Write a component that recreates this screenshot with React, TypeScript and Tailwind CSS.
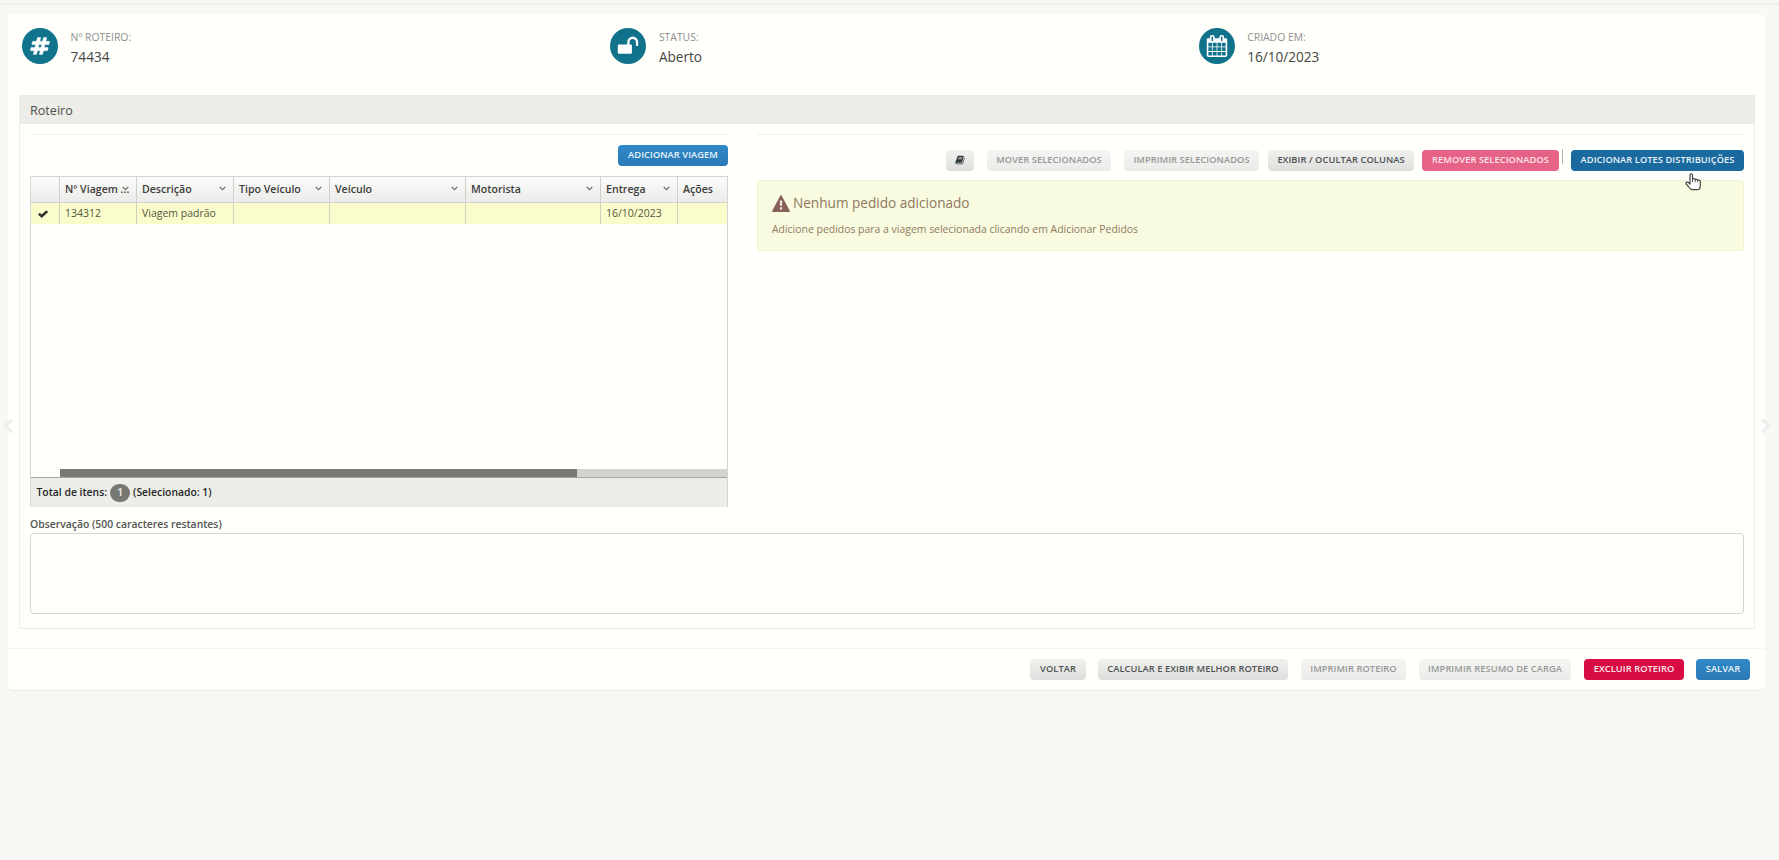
import * as React from "react";
import type { ReactNode } from "react";

const btn =
  "flex h-[21px] items-center justify-center rounded-[4px] pb-px text-[9.3px] font-semibold whitespace-nowrap tracking-[0.06px]";
const tones = {
  gray: "bg-linear-to-b from-[#f1f1ef] to-[#dededc] text-[#4f5353]",
  muted: "bg-linear-to-b from-[#f5f5f3] to-[#ebebe9] text-[#969997]",
  blue: "bg-linear-to-b from-[#3089c8] to-[#2b7ab5] text-[#e9f5fb]",
  navy: "bg-[#1a699f] text-[#e9f3f8]",
  pink: "bg-[#e66287] text-[#fbe4ea]",
  red: "bg-[#d80b43] text-[#fbe4ea]",
};

function Button({ tone, className, children }: { tone: keyof typeof tones; className: string; children: ReactNode }) {
  return <button className={`${btn} ${tones[tone]} ${className}`}>{children}</button>;
}

function HashIcon() {
  return (
    <svg viewBox="0 0 1792 1792" className="h-[20px] w-[20px]" fill="currentColor" stroke="currentColor" strokeWidth="40">
      <path d="M991 1024l64-256h-254l-64 256h254zm768-504l-56 224q-7 24-31 24h-327l-64 256h311q15 0 25 12 10 14 6 28l-56 224q-5 24-31 24h-327l-81 328q-7 24-31 24h-224q-16 0-26-12-9-12-6-28l78-312h-254l-81 328q-7 24-31 24h-225q-15 0-25-12-9-12-6-28l78-312h-311q-15 0-25-12-9-12-6-28l56-224q7-24 31-24h327l64-256h-311q-15 0-25-12-10-14-6-28l56-224q5-24 31-24h327l81-328q7-24 32-24h224q15 0 25 12 9 12 6 28l-78 312h254l81-328q7-24 32-24h224q15 0 25 12 9 12 6 28l-78 312h311q15 0 25 12 9 12 6 28z" />
    </svg>
  );
}

function UnlockIcon() {
  return (
    <svg viewBox="0 0 1792 1792" className="h-[22px] w-[22px]" fill="currentColor">
      <path d="M1728 576v256q0 26-19 45t-45 19h-64q-26 0-45-19t-19-45v-256q0-106-75-181t-181-75-181 75-75 181v192h96q40 0 68 28t28 68v576q0 40-28 68t-68 28h-960q-40 0-68-28t-28-68v-576q0-40 28-68t68-28h672v-192q0-185 131.500-316.500t316.500-131.500 316.500 131.500 131.500 316.500z" />
    </svg>
  );
}

function CalendarIcon() {
  return (
    <svg viewBox="0 0 1792 1792" className="h-[22px] w-[22px]" fill="currentColor">
      <path d="M192 1664h288v-288h-288v288zm352 0h320v-288h-320v288zm-352-352h288v-320h-288v320zm352 0h320v-320h-320v320zm-352-384h288v-288h-288v288zm736 736h320v-288h-320v288zm-384-736h320v-288h-320v288zm768 736h288v-288h-288v288zm-384-352h320v-320h-320v320zm-352-864v-288q0-13-9.500-22.500t-22.500-9.500h-64q-13 0-22.500 9.500t-9.500 22.500v288q0 13 9.500 22.500t22.500 9.500h64q13 0 22.500-9.500t9.500-22.500zm736 864h288v-320h-288v320zm-384-384h320v-288h-320v288zm384 0h288v-288h-288v288zm32-480v-288q0-13-9.500-22.500t-22.500-9.500h-64q-13 0-22.500 9.500t-9.500 22.500v288q0 13 9.500 22.500t22.500 9.500h64q13 0 22.500-9.500t9.500-22.500zm384-64v1280q0 52-38 90t-90 38h-1408q-52 0-90-38t-38-90v-1280q0-52 38-90t90-38h128v-96q0-66 47-113t113-47h64q66 0 113 47t47 113v96h384v-96q0-66 47-113t113-47h64q66 0 113 47t47 113v96h128q52 0 90 38t38 90z" />
    </svg>
  );
}

function BookIcon() {
  return (
    <svg viewBox="0 0 1792 1792" className="-mt-px h-[10px] w-[10px]" fill="#2f3a3d">
      <path d="M1703 478q40 57 18 129l-275 906q-19 64-76.500 107.500t-122.500 43.500h-923q-77 0-148.500-53.500t-99.500-131.500q-24-67-2-127 0-4 3-27t4-37q1-8-3-21.500t-3-19.500q2-11 8-21t16.500-23.500 16.500-23.500q23-38 45-91.500t30-91.500q3-10 .5-30t-.5-28q3-11 17-28t17-23q21-36 42-92t25-90q1-9-2.500-32t.5-28q4-13 22-30.500t22-22.500q19-26 42.500-84.500t27.500-96.500q1-8-3-25.500t-2-26.500q2-8 9-18t18-23 17-21q8-12 16.500-30.500t15-35 16-36 19.500-32 26.500-23.500 36-11.500 47.500 5.500l-1 3q38-9 51-9h761q74 0 114 56t18 130l-274 906q-36 119-71.500 153.500t-128.500 34.500h-869q-27 0-38 15-11 16-1 43 24 70 144 70h923q29 0 56-15.500t35-41.500l300-987q7-22 5-57 38 15 59 43zm-1064 2q-4 13 2 22.500t20 9.500h608q13 0 25.500-9.500t16.500-22.500l21-64q4-13-2-22.500t-20-9.500h-608q-13 0-25.500 9.500t-16.500 22.500zm-83 256q-4 13 2 22.500t20 9.500h608q13 0 25.500-9.500t16.500-22.500l21-64q4-13-2-22.500t-20-9.500h-608q-13 0-25.500 9.500t-16.500 22.500z" />
    </svg>
  );
}

function Info({ icon, label, value }: { icon: ReactNode; label: string; value: string }) {
  return (
    <div className="flex w-[588.3px] shrink-0 gap-[12.6px]">
      <div className="mt-[0.5px] flex size-9 shrink-0 items-center justify-center rounded-full bg-[#11728c] text-white">{icon}</div>
      <div>
        <div className="text-[10.4px] leading-[20px] text-[#8f908e]">{label}</div>
        <div className="text-[13.6px] leading-[20px] text-[#454644]">{value}</div>
      </div>
    </div>
  );
}

function Chevron() {
  return (
    <svg viewBox="0 0 7 5" className="mb-[4px] h-[5px] w-[7px] shrink-0" fill="none" stroke="#666" strokeWidth="1.1">
      <path d="M.7.8 3.500 3.700 6.300.8" />
    </svg>
  );
}

const columns = [
  { title: "", width: "w-[29px]", value: "", menu: false },
  { title: "Nº Viagem ...", width: "w-[77px]", value: "134312", menu: true },
  { title: "Descrição", width: "w-[97px]", value: "Viagem padrão", menu: true },
  { title: "Tipo Veículo", width: "w-[96px]", value: "", menu: true },
  { title: "Veículo", width: "w-[136px]", value: "", menu: true },
  { title: "Motorista", width: "w-[135px]", value: "", menu: true },
  { title: "Entrega", width: "w-[77px]", value: "16/10/2023", menu: true },
  { title: "Ações", width: "w-[49px]", value: "", menu: false },
];

function TripGrid() {
  return (
    <div className="mt-[10px] flex h-[331px] w-[698px] flex-col border border-b-0 border-[#d5d6d3]">
      <div className="flex h-[26px] shrink-0 border-b border-[#d2d3d0] bg-linear-to-b from-[#fbfbf9] to-[#ebebe9]">
        {columns.map((c, i) => (
          <div
            key={i}
            className={`${c.width} flex shrink-0 items-center justify-between border-r border-[#cfd0cd] pt-px pr-[7px] pl-[5px] text-[10.6px] font-semibold whitespace-nowrap text-[#3c3d3b] last:border-r-0`}
          >
            <span className="w-0">{c.title}</span>
            {c.menu && <Chevron />}
          </div>
        ))}
      </div>
      <div className="flex h-[21px] shrink-0 bg-[#fafdcb]">
        {columns.map((c, i) => (
          <div
            key={i}
            className={`${c.width} flex shrink-0 items-center border-r border-[#cfd0bd] pl-[5px] text-[10.5px] whitespace-nowrap text-[#555643] last:border-r-0`}
          >
            {i === 0 ? (
              <svg viewBox="0 0 10 8" className="ml-[2px] h-2 w-[10px]" fill="none" stroke="#333" strokeWidth="2.600">
                <path d="M.9 3.700 3.700 6.200 9.200 1.100" />
              </svg>
            ) : (
              c.value
            )}
          </div>
        ))}
      </div>
      <div className="flex-1" />
      <div className="ml-[29px] h-2 shrink-0 bg-[#d2d3cf]">
        <div className="h-full w-[517px] bg-[#787976]" />
      </div>
      <div className="flex h-[30px] shrink-0 items-center border-t border-[#a6a7a4] bg-[#ecede9] pl-[5.5px] text-[10.4px] font-semibold text-[#252624]">
        Total de itens:
        <span className="mx-[3px] flex h-[18px] w-5 items-center justify-center rounded-full bg-[#777874] text-[#f0f0ee]">1</span>
        (Selecionado: 1)
      </div>
    </div>
  );
}

export default function App() {
  return (
    <div className="relative h-[860px] w-[1779px] overflow-hidden bg-[#f8f9f5] font-['Open_Sans','Noto_Sans',sans-serif]">
      <div className="h-[5px] border-b-2 border-[#eff0ed]" />
      <main className="mt-[9px] ml-2 flex h-[677px] w-[1757px] flex-col rounded-[5px] border-b border-[#ebece9] bg-[#fffffc]">
        <div className="flex h-[81px] shrink-0 pt-[13px] pl-[14px]">
          <Info icon={<HashIcon />} label="Nº ROTEIRO:" value="74434" />
          <Info icon={<UnlockIcon />} label="STATUS:" value="Aberto" />
          <Info icon={<CalendarIcon />} label="CRIADO EM:" value="16/10/2023" />
        </div>
        <section className="ml-[11px] h-[534px] w-[1736px] shrink-0 border border-[#ecedea]">
          <h1 className="flex h-[28px] items-center bg-[#ecede9] pt-[2px] pl-[10px] text-[12.6px] text-[#4c4d4b]">Roteiro</h1>
          <div className="mt-[10px] ml-[10px] flex gap-[29px]">
            <div className="w-[698px] border-t border-[#eff0f2] pt-[10px]">
              <div className="flex justify-end">
                <Button tone="blue" className="w-[110px]">ADICIONAR VIAGEM</Button>
              </div>
              <TripGrid />
            </div>
            <div className="w-[987px] border-t border-[#eff0f2] pt-[15px]">
              <div className="flex justify-end">
                <Button tone="gray" className="mr-[13px] w-7">
                  <BookIcon />
                </Button>
                <Button tone="muted" className="mr-[13px] w-[124px]">MOVER SELECIONADOS</Button>
                <Button tone="muted" className="mr-[9px] w-[135px]">IMPRIMIR SELECIONADOS</Button>
                <Button tone="gray" className="mr-[8px] w-[146px]">EXIBIR / OCULTAR COLUNAS</Button>
                <Button tone="pink" className="mr-[3px] w-[137px]">REMOVER SELECIONADOS</Button>
                <div className="-mt-px mr-[8px] h-[15px] w-px bg-[#b5b6b3]" />
                <Button tone="navy" className="w-[173px]">ADICIONAR LOTES DISTRIBUIÇÕES</Button>
              </div>
              <div className="mt-[9px] h-[71px] rounded-[3px] border border-[#f6f0d5] bg-[#f9fbe0] pt-[10px] pl-[14px] text-[#8f7961]">
                <div className="flex h-6 items-center text-[13.6px]">
                  <svg viewBox="0 0 18 17" className="mr-[3px] h-[17px] w-[18px]">
                    <path d="M9 .7 17.300 16.300H.7Z" fill="#87605a" stroke="#87605a" strokeWidth="1.300" strokeLinejoin="round" />
                    <path d="M9 5.500v5.200M9 12.300v2.300" stroke="#f3ecd9" strokeWidth="2.200" />
                  </svg>
                  Nenhum pedido adicionado
                </div>
                <div className="mt-[4px] text-[10.44px] leading-5">Adicione pedidos para a viagem selecionada clicando em Adicionar Pedidos</div>
              </div>
            </div>
          </div>
          <label className="mt-[9px] ml-[10px] block h-[17px] text-[10.4px] leading-[17px] font-semibold text-[#535452]">Observação (500 caracteres restantes)</label>
          <textarea className="ml-[10px] block h-[81px] w-[1714px] resize-none rounded-[4px] border border-[#d5d6d3] bg-[#fffffc]" />
        </section>
        <footer className="mt-[19px] flex flex-1 justify-end border-t border-[#f4f5f5] pt-[10px] pr-[15px]">
          <Button tone="gray" className="mr-[12px] w-[56px]">VOLTAR</Button>
          <Button tone="gray" className="mr-[13px] w-[190px]">CALCULAR E EXIBIR MELHOR ROTEIRO</Button>
          <Button tone="muted" className="mr-[13px] w-[105px]">IMPRIMIR ROTEIRO</Button>
          <Button tone="muted" className="mr-[13px] w-[152px]">IMPRIMIR RESUMO DE CARGA</Button>
          <Button tone="red" className="mr-[12px] w-[100px]">EXCLUIR ROTEIRO</Button>
          <Button tone="blue" className="w-[54px]">SALVAR</Button>
        </footer>
      </main>
      <svg viewBox="0 0 10 16" className="absolute top-[418px] left-[3px] h-4 w-[10px]" fill="none" stroke="#eeefef" strokeWidth="3.500">
        <path d="M9 1.500 2 8l7 6.500" />
      </svg>
      <svg viewBox="0 0 10 16" className="absolute top-[418px] left-[1761px] h-4 w-[10px]" fill="none" stroke="#eeefef" strokeWidth="3.500">
        <path d="m1 1.500 7 6.500-7 6.500" />
      </svg>
      <svg viewBox="0 0 17 18" className="absolute top-[173px] left-[1685px] h-[18px] w-[17px]" fill="#fff" stroke="#444" strokeLinejoin="round">
        <path d="M5 10V2.300Q5 .8 6.200.8T7.500 2.300V6q2-.8 2.700.6 1.700-.7 2.500.6 2.600-.6 2.600 1.500v4q0 4-3.300 4H8Q5.500 16.700 4 14.200L1.200 11q-.6-1.500.7-1.800T5 11z" strokeWidth="1.200" />
        <path d="M7.500 6v3M10.200 6.600v2.600M12.700 7.200v2.200" strokeWidth=".9" />
      </svg>
    </div>
  );
}
